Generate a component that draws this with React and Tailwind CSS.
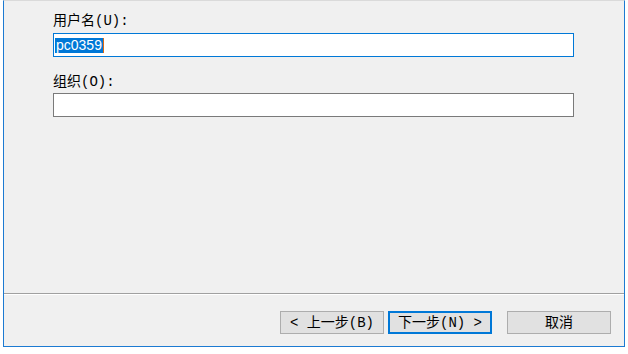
export default function App() {
  const font = { fontFamily: '"Liberation Mono", "Noto Sans CJK SC", monospace' };
  return (
    <div className="w-[628px] h-[354px] bg-white">
      <div className="ml-[3px] w-[622px] h-[347px] flex flex-col border-x border-b border-t border-x-[#1c7ad2] border-b-[#1c7ad2] border-t-[#dadada] bg-[#f0f0f0]">
        <div className="h-[292px] pl-[49px] pt-[12px] text-[14px] text-black" style={font}>
          <div className="h-[20px] leading-[16px]">用户名(U):</div>
          <div className="w-[521px] h-[24px] border border-[#0078d7] bg-white flex items-center pl-[1px]">
            <span className="bg-[#0078d7] text-white text-[14px] leading-[15px] px-[1px]" style={{ fontFamily: '"Liberation Sans", Arial, sans-serif' }}>pc0359</span>
            <span className="w-[1px] h-[15px] bg-[#e06a10]"></span>
          </div>
          <div className="h-[19px] mt-[17px] leading-[16px]">组织(O):</div>
          <div className="w-[521px] h-[24px] border border-[#7a7a7a] bg-white"></div>
        </div>
        <div className="h-[1px] bg-[#a0a0a0]"></div>
        <div className="h-[1px] bg-white"></div>
        <div className="flex-1 flex justify-end pr-[13px] pt-[16px] text-[14px] text-black" style={font}>
          <div className="w-[104px] h-[23px] border border-[#adadad] bg-[#e1e1e1] flex items-center justify-center leading-none">&lt; 上一步(B)</div>
          <div className="ml-[4px] w-[104px] h-[23px] border-2 border-[#0078d7] bg-[#e1e1e1] flex items-center justify-center leading-none">下一步(N) &gt;</div>
          <div className="ml-[15px] w-[104px] h-[23px] border border-[#adadad] bg-[#e1e1e1] flex items-center justify-center leading-none">取消</div>
        </div>
      </div>
    </div>
  );
}
